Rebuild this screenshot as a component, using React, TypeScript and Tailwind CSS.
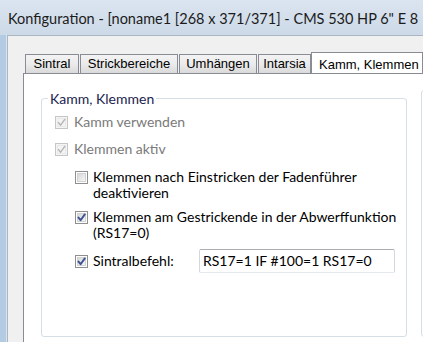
import React from "react";

const uiFont = { fontFamily: 'Lato, "Noto Sans", sans-serif' };

const CheckBox = ({ checked, disabled }: { checked?: boolean; disabled?: boolean }) => (
  <div
    className={
      "w-[13px] h-[13px] shrink-0 border p-[1px] " +
      (disabled ? "border-[#c6c6c6] bg-[#f4f4f4]" : "border-[#8e8f8f] bg-white")
    }
  >
    <div
      className={
        "w-full h-full border " +
        (disabled
          ? "border-[#e8e8e8] bg-[#f4f4f4]"
          : "border-[#d2d2d2] bg-gradient-to-br from-[#d8d8d8] to-[#f7f7f7]")
      }
    >
      {checked && (
        <svg viewBox="0 0 9 9" className="w-[9px] h-[9px] -mt-[1px] -ml-[1px]">
          <path
            d="M1.5 4.6 L3.6 7.2 L7.8 1.4"
            fill="none"
            stroke={disabled ? "#b4b4b4" : "#3d5394"}
            strokeWidth={disabled ? 1.4 : 1.9}
            strokeLinecap="round"
            strokeLinejoin="round"
          />
        </svg>
      )}
    </div>
  </div>
);

const tabs = [
  { label: "Sintral", w: "w-[54px]" },
  { label: "Strickbereiche", w: "w-[98px]" },
  { label: "Umhängen", w: "w-[78px]" },
  { label: "Intarsia", w: "w-[53px]" },
];

export default function App() {
  return (
    <div className="w-[423px] h-[342px] overflow-hidden flex flex-col bg-[#c9d8e8]">
      {/* title bar */}
      <div className="h-[35px] shrink-0 flex items-center pl-[8px] pt-[2px] bg-gradient-to-b from-[#dbe5f0] to-[#ccd9e7] whitespace-nowrap overflow-hidden">
        <span className="text-[14.5px] text-[#1b1b1b]" style={uiFont}>
          Konfiguration - [noname1 [268 x 371/371] - CMS 530 HP 6" E 8
        </span>
      </div>

      <div className="flex flex-1 min-h-0">
        {/* left frame */}
        <div className="w-[7px] shrink-0 bg-[#b4cbe4] border-r border-[#dde3ea]" />

        {/* client area */}
        <div className="flex-1 min-w-0 bg-[#f0f0f0] border-t border-l border-[#a9b6c4] pt-[15px] pl-[15px] flex flex-col">
          {/* tab strip */}
          <div className="flex items-end h-[22px] pl-[2px] gap-[1px] whitespace-nowrap overflow-hidden" style={{ fontFamily: '"Liberation Sans", Arial, sans-serif' }}>
            {tabs.map((t) => (
              <div
                key={t.label}
                className={
                  t.w +
                  " h-[19px] shrink-0 border border-b-0 border-[#898c95] bg-gradient-to-b from-[#f3f3f3] via-[#ebebeb] to-[#dadada] text-[13px] text-black flex items-center justify-center"
                }
              >
                {t.label}
              </div>
            ))}
            <div className="flex-1 h-[22px] -ml-[1px] -mb-[1px] relative z-10 border border-b-0 border-[#898c95] bg-white text-[13px] text-black pl-[7px] pt-[2px] overflow-hidden">
              Kamm, Klemmen
            </div>
          </div>

          {/* tab page */}
          <div className="flex-1 bg-white border-t border-l border-[#898c95] pl-[17px] pt-[16px] flex gap-[14px]" style={uiFont}>
            <fieldset className="w-[366px] h-[247px] shrink-0 border border-[#d5dfe5] rounded-[3px] pl-[13px]">
              <legend className="-ml-[7px] px-[2px] text-[14px] leading-[17px] text-[#1c2450]">Kamm, Klemmen</legend>

              <div className="flex flex-col text-[14px] leading-[16px] text-black">
                <div className="flex items-center gap-[6px] h-[16px] mt-[7px] text-[#7a7a7a]">
                  <CheckBox checked disabled />
                  <span>Kamm verwenden</span>
                </div>
                <div className="flex items-center gap-[6px] h-[16px] mt-[11px] text-[#7a7a7a]">
                  <CheckBox checked disabled />
                  <span>Klemmen aktiv</span>
                </div>
                <div className="flex items-start gap-[5px] mt-[12px] ml-[20px]">
                  <div className="pt-[2px]"><CheckBox /></div>
                  <span className="whitespace-nowrap">Klemmen nach Einstricken der Fadenführer<br />deaktivieren</span>
                </div>
                <div className="flex items-start gap-[5px] mt-[8px] ml-[20px]">
                  <div className="pt-[2px]"><CheckBox checked /></div>
                  <span className="whitespace-nowrap">Klemmen am Gestrickende in der Abwerffunktion<br />(RS17=0)</span>
                </div>
                <div className="flex items-center gap-[5px] mt-[8px] ml-[20px] h-[24px]">
                  <CheckBox checked />
                  <span className="w-[101px]">Sintralbefehl:</span>
                  <div className="w-[196px] h-[24px] border border-[#abadb3] border-b-[#e3e9ef] border-l-[#d3d7de] border-r-[#d3d7de] rounded-[2px] flex items-center pl-[3px] whitespace-nowrap">
                    RS17=1 IF #100=1 RS17=0
                  </div>
                </div>
              </div>
            </fieldset>

            <fieldset className="w-[40px] h-[247px] shrink-0 border border-[#d5dfe5] rounded-[3px]" />
          </div>
        </div>
      </div>
    </div>
  );
}
